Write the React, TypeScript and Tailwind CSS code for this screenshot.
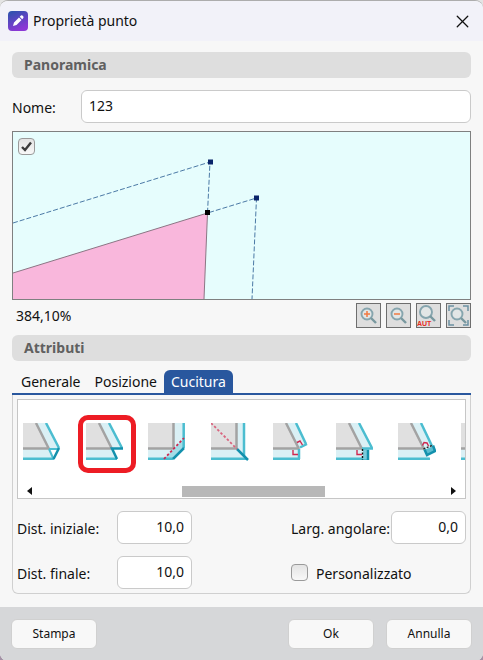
import { useState } from 'react'
import type { ReactNode } from 'react'
import { X } from 'lucide-react'

const GRAY = '#a3a3a3'
const CYAN = '#4bbdd0'
const TEAL = '#1391ad'
const PALE = '#daf0f5'
const RED = '#cf2850'

function SeamIcon({ children }: { children: ReactNode }) {
  return (
    <svg width="38" height="38" viewBox="0 0 38 38" fill="none" strokeWidth="2.5" className="shrink-0" aria-hidden="true">
      {children}
    </svg>
  )
}

// Base shape shared by the slanted corners
function Slanted({ outer = 36, end = 25, bottom = 31 }: { outer?: number; end?: number; bottom?: number }) {
  return (
    <>
      <path d="M0 0H13L26 26H0Z" fill="#e0e0e0" />
      <path d={`M13 0H23L${outer} ${end}L26 26Z`} fill={PALE} />
      <path d={`M0 26H26L${bottom} 36H0Z`} fill={PALE} />
      <path d="M13 0L26 26M0 25.5H26" stroke={GRAY} />
      <path d={`M23 0L${outer} ${end}M0 35.7H${bottom}`} stroke={CYAN} />
    </>
  )
}

const seams = [
  {
    name: 'Angolo smussato',
    icon: (
      <SeamIcon>
        <Slanted />
        <path d="M26 26L30.5 36M26 26H36" stroke={CYAN} strokeWidth="2" />
        <path d="M36 25L30.5 36" stroke={TEAL} />
      </SeamIcon>
    ),
  },
  {
    name: 'Angolo a gradino',
    icon: (
      <SeamIcon>
        <Slanted />
        <path d="M37 25.5H26L31 36" stroke={TEAL} />
      </SeamIcon>
    ),
  },
  {
    name: 'Angolo tagliato',
    icon: (
      <SeamIcon>
        <path d="M0 0H26V26H0Z" fill="#e0e0e0" />
        <path d="M26 0H36V25L25 36H0V26H26Z" fill={PALE} />
        <path d="M36 15V25L25 36H16Z" fill="#a3dce7" />
        <path d="M25.5 0V26M0 25.5H26" stroke={GRAY} />
        <path d="M35.7 0V25M0 35.7H25" stroke={CYAN} />
        <path d="M36 25L25 36" stroke={TEAL} />
        <path d="M16 36L36 15" stroke={RED} strokeWidth="1.8" strokeDasharray="2.5 2" />
      </SeamIcon>
    ),
  },
  {
    name: 'Angolo bisettrice',
    icon: (
      <SeamIcon>
        <path d="M0 0H26V26H0Z" fill="#e0e0e0" />
        <path d="M26 0H33V33L36 36H0V26H26Z" fill={PALE} />
        <path d="M25.5 0V26M0 25.5H26" stroke={GRAY} />
        <path d="M33 0V33M0 35.7H36" stroke={CYAN} />
        <path d="M26 26L37 37" stroke={TEAL} />
        <path d="M0 0L26 26" stroke="#d9657f" strokeWidth="1.8" strokeDasharray="2.5 2" />
      </SeamIcon>
    ),
  },
  {
    name: 'Angolo perpendicolare doppio',
    icon: (
      <SeamIcon>
        <Slanted outer={33} end={21} bottom={27} />
        <path d="M34 21L27 24.5M26 26V36" stroke={CYAN} />
        <path d="M20 27V31.500H25M24 19.500L27 18L29.500 22" stroke={RED} strokeWidth="1.4" />
      </SeamIcon>
    ),
  },
  {
    name: 'Angolo perpendicolare finale',
    icon: (
      <SeamIcon>
        <Slanted bottom={33} />
        <path d="M27 26H33V36H27Z" fill="#7ccbdc" />
        <path d="M26 25.5H37" stroke={CYAN} />
        <path d="M32 27V37" stroke={TEAL} />
        <path d="M26.500 26V37" stroke="#111" strokeWidth="1.4" strokeDasharray="2 1.5" />
        <path d="M21 27V31.500H26" stroke={RED} strokeWidth="1.4" />
      </SeamIcon>
    ),
  },
  {
    name: 'Angolo perpendicolare iniziale',
    icon: (
      <SeamIcon>
        <Slanted outer={34} end={23} bottom={32} />
        <path d="M26 27L35 23L37 28L29 32Z" fill="#5bbdd0" />
        <path d="M35 22.5L37 28L29 32L26.5 26.500" stroke={TEAL} />
        <path d="M25.500 26L35 22" stroke="#222" strokeWidth="1.4" strokeDasharray="2 1.5" />
        <path d="M24.500 22.500L26 19.500L29 20L30.500 23" stroke={RED} strokeWidth="1.4" />
      </SeamIcon>
    ),
  },
  {
    name: 'Angolo retto',
    icon: (
      <SeamIcon>
        <Slanted />
      </SeamIcon>
    ),
  },
]

function SectionTitle({ children }: { children: ReactNode }) {
  return (
    <h2 className="h-[26px] rounded-md bg-[#dedede] px-3 text-[14px] leading-[26px] font-bold text-[#606060]">{children}</h2>
  )
}

function CheckBox({ id, label, defaultChecked }: { id: string; label?: string; defaultChecked?: boolean }) {
  return (
    <span className="relative block size-[17px]">
      <input
        id={id}
        type="checkbox"
        aria-label={label}
        defaultChecked={defaultChecked}
        className="peer block size-[17px] appearance-none rounded-[4px] border border-[#9a9a9a] bg-linear-to-b from-[#e4e4e4] to-[#f8f8f8]"
      />
      <svg
        viewBox="0 0 17 17"
        className="pointer-events-none absolute inset-0 hidden size-[17px] peer-checked:block"
        fill="none"
        stroke="#3c3c3c"
        strokeWidth="2.4"
      >
        <path d="M4 9L7 12L13 4.5" />
      </svg>
    </span>
  )
}

function NumberField({ id, label, value }: { id: string; label: string; value: string }) {
  return (
    <>
      <label htmlFor={id} className="pt-0.5 whitespace-nowrap">{label}</label>
      <input
        id={id}
        defaultValue={value}
        className="h-[33px] w-[75px] rounded-md border border-[#cacaca] bg-white px-[7px] pb-0.5 text-right"
      />
    </>
  )
}

function Magnifier({ children, cx = 10, cy = 10, r = 5.5 }: { children?: ReactNode; cx?: number; cy?: number; r?: number }) {
  return (
    <svg width="23" height="23" viewBox="0 0 23 23" fill="none" aria-hidden="true">
      <circle cx={cx} cy={cy} r={r} fill="#e2e6e6" stroke="#86a5ae" strokeWidth="1.9" />
      <path d={`M${cx + 4} ${cy + 4}L${cx + 9} ${cy + 9}`} stroke="#78989f" strokeWidth="2.4" />
      {children}
    </svg>
  )
}

const zoomButtons = [
  { name: 'Ingrandisci', icon: <Magnifier><path d="M7 10H13M10 7V13" stroke="#f17a42" strokeWidth="1.5" /></Magnifier> },
  { name: 'Riduci', icon: <Magnifier><path d="M7 10H13" stroke="#f17a42" strokeWidth="1.5" /></Magnifier> },
  {
    name: 'Zoom automatico',
    icon: (
      <Magnifier cx={9} cy={8} r={6}>
        <text x="0" y="22" fill="#e62b20" fontSize="7" fontWeight="700" fontFamily="Liberation Sans, sans-serif">AUT</text>
      </Magnifier>
    ),
  },
  {
    name: 'Adatta',
    icon: (
      <Magnifier>
        <path d="M2 7V2H7M16 2H21V7M21 16V21H16M7 21H2V16" stroke="#6c91a3" strokeWidth="1.5" />
      </Magnifier>
    ),
  },
]

function Preview() {
  return (
    <div className="relative h-[169px] overflow-hidden border border-[#7f8080] bg-[#e6fdfd]">
      <svg className="block h-full w-full" fill="none" aria-hidden="true">
        <path d="M0 141L194.5 81L191 167H0Z" fill="#f9b7dc" />
        <path d="M0 141L194.5 81L191 167" stroke="#8b7684" />
        <path d="M0 91L197 30L194.5 81L243.5 66L239 167" stroke="#4b79a5" strokeDasharray="5 2" />
        <path d="M195 27.500h5v5h-5zM241 63.500h5v5h-5z" fill="#0a246a" />
        <path d="M192 78h5v5h-5z" fill="#000" />
      </svg>
      <div className="absolute top-1.5 left-[5px]">
        <CheckBox id="mostra" label="Mostra anteprima" defaultChecked />
      </div>
    </div>
  )
}

const tabs = ['Generale', 'Posizione', 'Cucitura']

const footerButton = 'h-[30px] w-[86px] rounded-md border border-[#d0d0d0] bg-[#f8f8f8] text-[12px]'

export default function App() {
  const [tab, setTab] = useState('Cucitura')
  const [seam, setSeam] = useState(1)

  return (
    <div className="bg-linear-to-b from-[#e4e4e4] to-[#a391a5]">
      <main className="flex min-h-screen flex-col overflow-hidden rounded-lg border-t border-[#adadad] bg-[#f7f7f7] font-['Noto_Sans',sans-serif] text-[14px] leading-5 text-[#111]">
        <header className="flex h-10 items-center bg-[#f2f2f9] pr-2.5 pl-2">
          <svg width="20" height="20" viewBox="0 0 20 20" aria-hidden="true">
            <defs>
              <linearGradient id="logo" x1="0" y1="0" x2="0.4" y2="1">
                <stop offset="0" stopColor="#2854ab" />
                <stop offset="1" stopColor="#8b38d5" />
              </linearGradient>
            </defs>
            <rect width="20" height="20" rx="4" fill="url(#logo)" />
            <path d="M5 15L6 11.5L11 6.5L13.5 9L8.5 14Z M11.7 5.8L13 4.5Q14 4 15 5Q16 6 15.300 7L14.200 8.200Z" fill="#fff" />
          </svg>
          <h1 className="ml-[5px] flex-1">Proprietà punto</h1>
          <button aria-label="Chiudi">
            <X size={21} strokeWidth={1.5} />
          </button>
        </header>

        <div className="flex flex-1 flex-col px-3 pt-[11px] pb-[13px]">
          <SectionTitle>Panoramica</SectionTitle>
          <div className="mt-3 mb-2 flex items-center">
            <label htmlFor="nome" className="w-[69px] pt-0.5">Nome:</label>
            <input
              id="nome"
              defaultValue="123"
              className="h-[33px] min-w-0 flex-1 rounded-md border border-[#cacaca] bg-white px-[7px] pb-0.5"
            />
          </div>

          <Preview />
          <div className="mt-[3px] mb-[7px] flex items-center justify-between pl-1">
            <output>384,10%</output>
            <div className="flex gap-[5px]">
              {zoomButtons.map((button) => (
                <button key={button.name} aria-label={button.name} className="size-[25px] border border-[#6e6e6e] bg-[#dedede]">
                  {button.icon}
                </button>
              ))}
            </div>
          </div>

          <SectionTitle>Attributi</SectionTitle>
          <div role="tablist" className="mt-[9px] flex border-b-2 border-[#29579e] pl-0.5">
            {tabs.map((name) => (
              <button
                key={name}
                role="tab"
                aria-selected={tab === name}
                onClick={() => setTab(name)}
                className={`h-[23px] rounded-t-md px-[7px] leading-6 ${tab === name ? 'bg-[#29579e] text-white' : ''}`}
              >
                {name}
              </button>
            ))}
          </div>

          <section className="flex-1 rounded-b-md border border-t-0 border-[#d0d0d0] px-1 pt-1 pb-1">
            <div className="overflow-hidden border border-[#c6c6c6] bg-white">
              <div className="flex w-[481px] justify-between pt-[23px] pl-[5px]">
                {seams.map((item, index) => (
                  <button key={item.name} aria-label={item.name} onClick={() => setSeam(index)} className="relative">
                    {item.icon}
                    {seam === index && (
                      <span className="absolute -top-1 -right-2 -bottom-2 -left-1 border border-[#6c91c8]">
                        <span className="absolute -inset-[5px] rounded-[10px] border-[5px] border-[#ed1c24]" />
                      </span>
                    )}
                  </button>
                ))}
              </div>
              <div className="mt-[23px] flex h-[14px] items-center justify-between px-[9px]">
                <button aria-label="Indietro">
                  <svg width="5" height="8" viewBox="0 0 5 8"><path d="M5 0V8L0 4Z" fill="#111" /></svg>
                </button>
                <div className="flex-1 pl-[35%]">
                  <div className="h-[11px] w-[53%] bg-[#b8b8b8]" />
                </div>
                <button aria-label="Avanti">
                  <svg width="5" height="8" viewBox="0 0 5 8"><path d="M0 0V8L5 4Z" fill="#111" /></svg>
                </button>
              </div>
            </div>

            <div className="mt-3 flex items-center justify-between">
              <div className="flex w-[175px] items-center justify-between">
                <NumberField id="iniziale" label="Dist. iniziale:" value="10,0" />
              </div>
              <div className="flex w-[175px] items-center justify-between">
                <NumberField id="angolare" label="Larg. angolare:" value="0,0" />
              </div>
            </div>
            <div className="mt-3 flex items-center justify-between">
              <div className="flex w-[175px] items-center justify-between">
                <NumberField id="finale" label="Dist. finale:" value="10,0" />
              </div>
              <div className="flex w-[175px] items-center gap-2">
                <CheckBox id="personalizzato" />
                <label htmlFor="personalizzato" className="pt-0.5">Personalizzato</label>
              </div>
            </div>
          </section>
        </div>

        <footer className="flex h-[54px] items-center gap-3 bg-[#d6d7d9] px-[11px]">
          <button className={`${footerButton} mr-auto`}>Stampa</button>
          <button className={footerButton}>Ok</button>
          <button className={footerButton}>Annulla</button>
        </footer>
      </main>
    </div>
  )
}
